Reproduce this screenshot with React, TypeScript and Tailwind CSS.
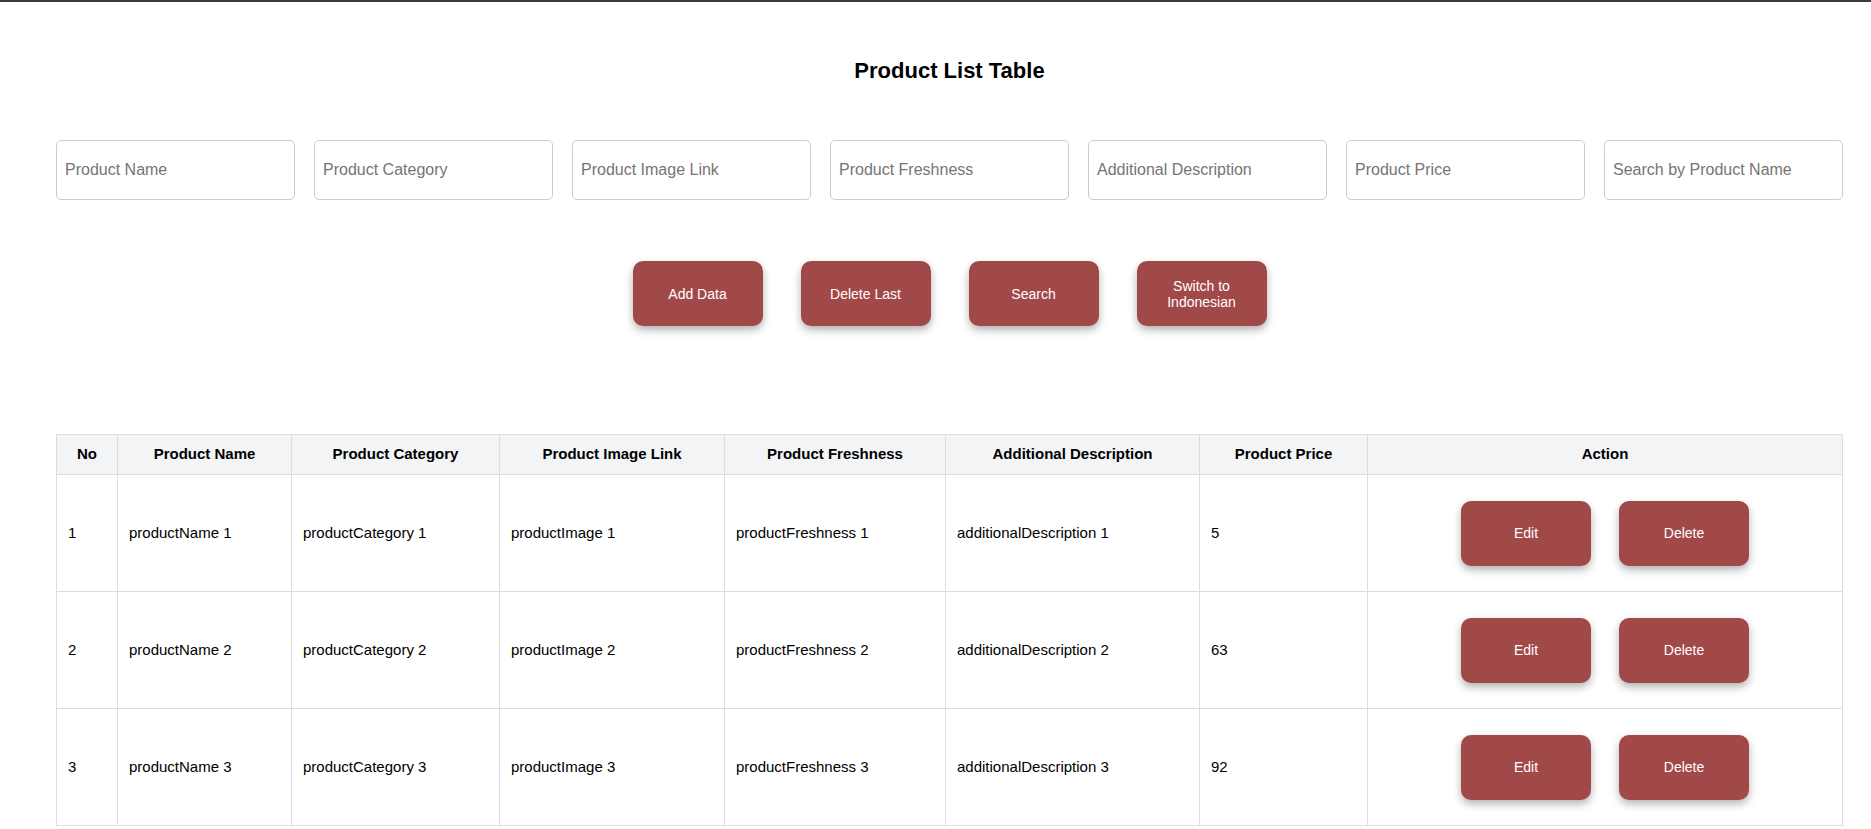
import React from "react";

const inputs = [
  "Product Name",
  "Product Category",
  "Product Image Link",
  "Product Freshness",
  "Additional Description",
  "Product Price",
  "Search by Product Name",
];

const actions = ["Add Data", "Delete Last", "Search", "Switch to Indonesian"];

const columns = [
  { label: "No", w: "w-[61px]" },
  { label: "Product Name", w: "w-[174px]" },
  { label: "Product Category", w: "w-[208px]" },
  { label: "Product Image Link", w: "w-[225px]" },
  { label: "Product Freshness", w: "w-[221px]" },
  { label: "Additional Description", w: "w-[254px]" },
  { label: "Product Price", w: "w-[168px]" },
  { label: "Action", w: "w-[475px]" },
];

const prices = [5, 63, 92];

const rows = prices.map((price, i) => ({
  no: i + 1,
  name: `productName ${i + 1}`,
  category: `productCategory ${i + 1}`,
  image: `productImage ${i + 1}`,
  freshness: `productFreshness ${i + 1}`,
  description: `additionalDescription ${i + 1}`,
  price,
}));

function RedButton({ text, className }: { text: string; className?: string }) {
  return (
    <button
      className={`w-[130px] h-[65px] px-[20px] rounded-[10px] bg-[#a14949] text-white text-[14px] leading-[16px] shadow-[0_4px_8px_rgba(0,0,0,0.3)] ${className ?? ""}`}
    >
      {text}
    </button>
  );
}

export default function App() {
  return (
    <div className="min-h-screen bg-white border-t-2 border-[#3b3b3b] font-['Liberation_Sans',Arial,sans-serif] text-black">
      <div className="pl-[56px] pr-[28px]">
        <h1 className="mt-[56px] text-center text-[22px] leading-[25px] font-bold">
          Product List Table
        </h1>

        <div className="mt-[57px] flex gap-[19px]">
          {inputs.map((p) => (
            <input
              key={p}
              placeholder={p}
              className="flex-1 min-w-0 h-[60px] px-[8px] text-[16px] border border-[#cccccc] rounded-[5px] placeholder:text-[#757575] outline-none"
            />
          ))}
        </div>

        <div className="mt-[61px] flex justify-center gap-[38px]">
          {actions.map((a) => (
            <RedButton key={a} text={a} />
          ))}
        </div>

        <table className="mt-[108px] w-full table-fixed border-collapse text-[15px]">
          <colgroup>
            {columns.map((c) => (
              <col key={c.label} className={c.w} />
            ))}
          </colgroup>
          <thead>
            <tr className="bg-[#f3f4f6]">
              {columns.map((c) => (
                <th
                  key={c.label}
                  className="h-[40px] border border-[#dddddd] font-bold text-center px-[12px]"
                >
                  {c.label}
                </th>
              ))}
            </tr>
          </thead>
          <tbody>
            {rows.map((r) => (
              <tr key={r.no}>
                <td className="h-[117px] border border-[#dddddd] px-[11px]">{r.no}</td>
                <td className="border border-[#dddddd] px-[11px]">{r.name}</td>
                <td className="border border-[#dddddd] px-[11px]">{r.category}</td>
                <td className="border border-[#dddddd] px-[11px]">{r.image}</td>
                <td className="border border-[#dddddd] px-[11px]">{r.freshness}</td>
                <td className="border border-[#dddddd] px-[11px]">{r.description}</td>
                <td className="border border-[#dddddd] px-[11px]">{r.price}</td>
                <td className="border border-[#dddddd] px-[11px]">
                  <div className="flex justify-center gap-[28px]">
                    <RedButton text="Edit" />
                    <RedButton text="Delete" />
                  </div>
                </td>
              </tr>
            ))}
          </tbody>
        </table>
      </div>
    </div>
  );
}
